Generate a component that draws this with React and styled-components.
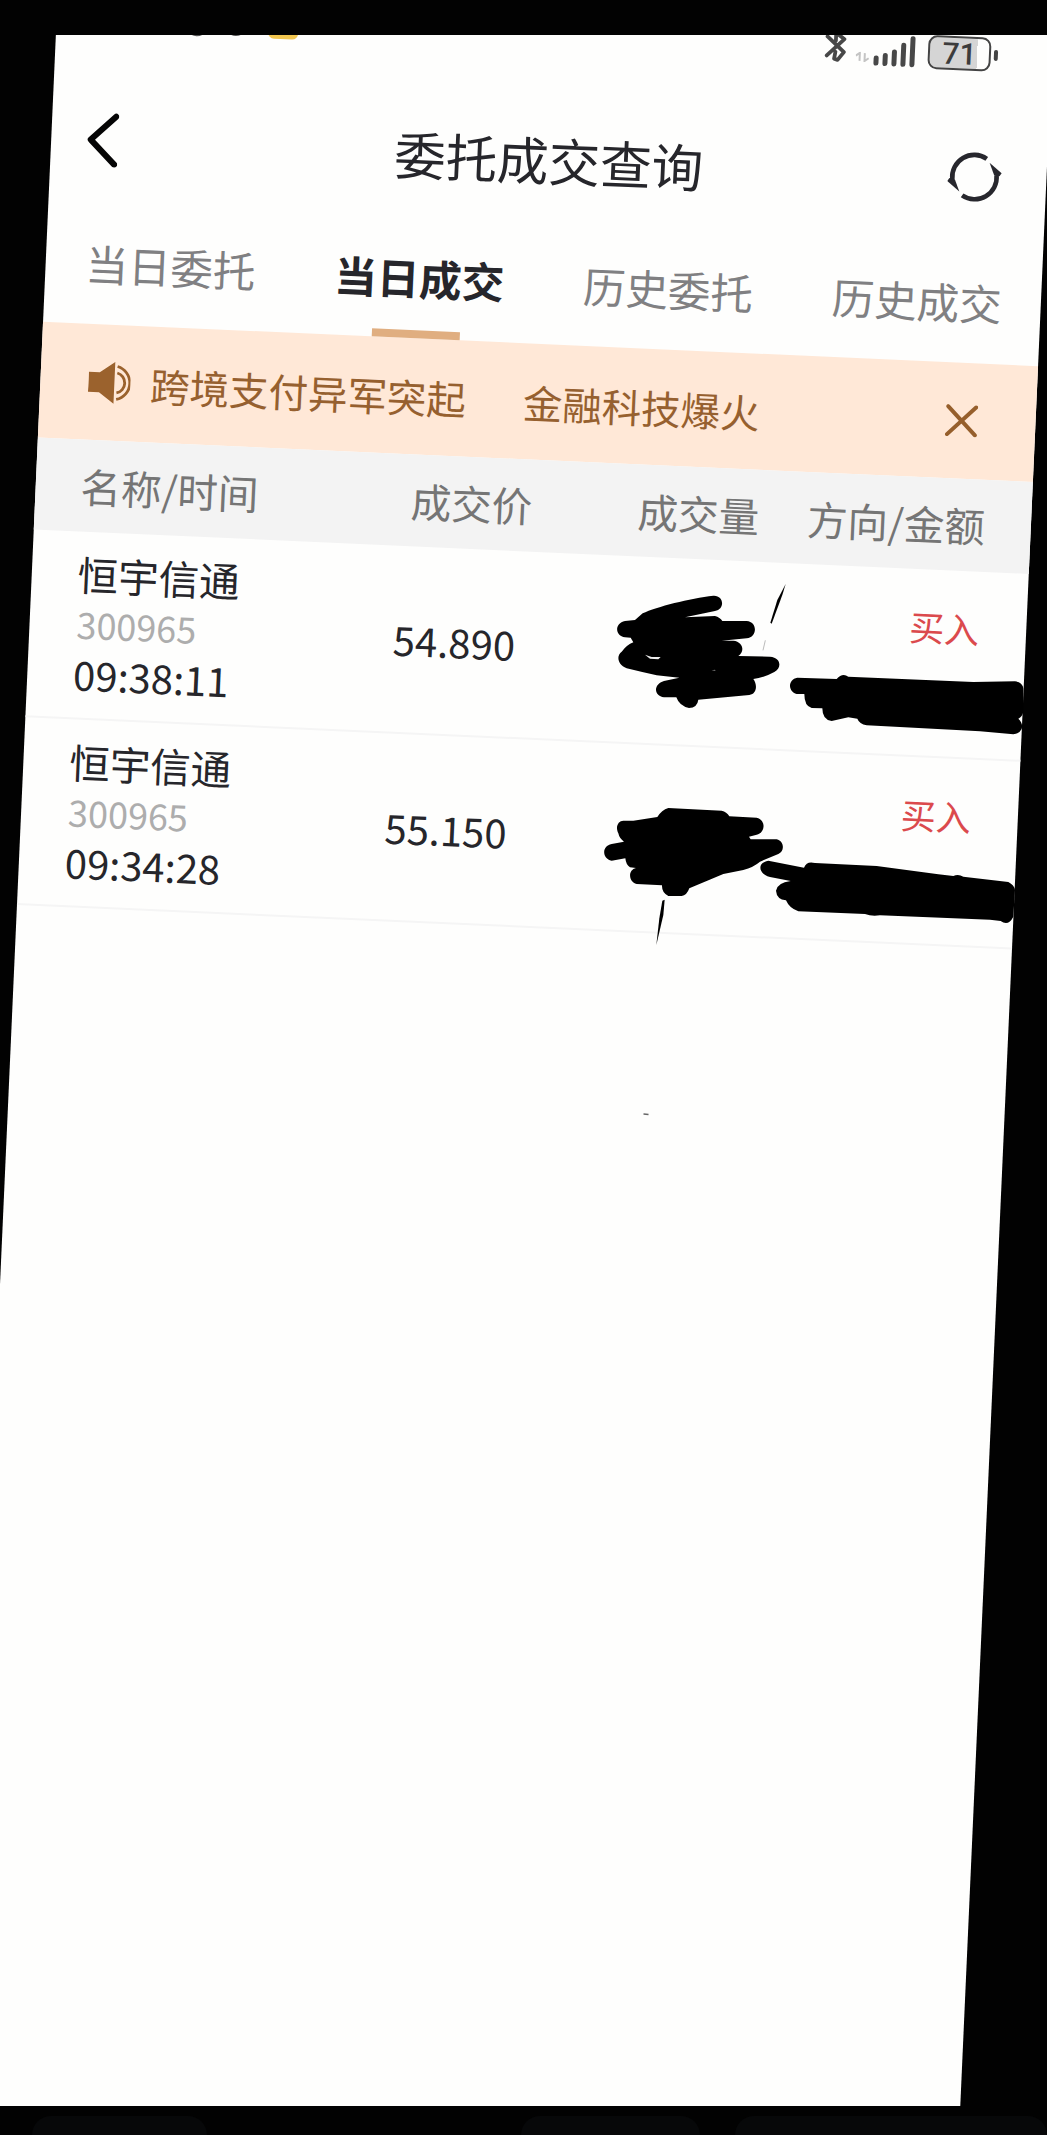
import React from 'react';
import styled, { createGlobalStyle } from 'styled-components';

const tabs = ['当日委托', '当日成交', '历史委托', '历史成交'];
const columns = ['名称/时间', '成交价', '成交量', '方向/金额'];
const news = ['跨境支付异军突起', '金融科技爆火'];
const deals = [
  { name: '恒宇信通', code: '300965', time: '09:38:11', price: '54.890', side: '买入' },
  { name: '恒宇信通', code: '300965', time: '09:34:28', price: '55.150', side: '买入' },
];
const signal = [10, 13, 17, 24, 31];

const BluetoothIcon = () => (
  <svg width='24' height='36' viewBox='0 0 24 36' fill='none' stroke='#484848' strokeWidth='3.8' strokeLinecap='round' strokeLinejoin='round'>
    <path d='M4 8 L21 23 L15 31 L11.5 30 L12.5 23 M12.5 12 V4 L21 10 L4 27' />
  </svg>
);

const BackIcon = () => (
  <svg width='32' height='56' viewBox='0 0 32 56' fill='none' stroke='#050505' strokeWidth='6' strokeLinecap='round' strokeLinejoin='round'>
    <path d='M29 5 L4.5 29 L29 53' />
  </svg>
);

const RefreshIcon = () => (
  <svg width='56' height='56' viewBox='-27 -27 56 56' fill='none' stroke='#27272d' strokeWidth='4.6'>
    <path d='M-22 3 A22 22 0 0 1 11.5 -18.8' />
    <path d='M22 -3 A22 22 0 0 1 -11.5 18.8' />
    <path d='M14.5 -15 L27 -5 L25 -2 L19.5 -3 Z' fill='#27272d' stroke='none' />
    <path d='M-14.5 15 L-27 5 L-25 2 L-19.5 3 Z' fill='#27272d' stroke='none' />
  </svg>
);

const SpeakerIcon = () => (
  <svg width='42' height='44' viewBox='0 0 42 44' fill='none' stroke='#9b622d' strokeWidth='2.8'>
    <path d='M0 12 H11 L26 1 V43 L11 32 H0 Z' fill='#9b622d' stroke='none' />
    <path d='M28.5 12 A10.3 10.3 0 0 1 28.5 32' />
    <path d='M28.5 5.5 A17 17 0 0 1 28.5 38.5' />
  </svg>
);

const CloseIcon = () => (
  <svg width='32' height='32' viewBox='0 0 32 32' stroke='#965f2c' strokeWidth='4' strokeLinecap='round'>
    <path d='M2 2 L30 30 M30 2 L2 30' />
  </svg>
);

// pen strokes that hide the volumes and amounts
const Redaction = () => (
  <Ink width='1047' height='2135' viewBox='0 0 1047 2135'>
    <g transform='translate(590 560) scale(0.33333)'>
      <path d='M158 160 C200 140 300 115 370 107 C402 105 406 148 375 153 L285 172 L375 168 Q390 172 397 183 L470 183 C503 185 503 232 470 235 L395 242 L430 242 C460 245 465 275 445 288 L540 290 C575 293 575 325 553 336 Q520 354 490 357 C502 372 502 402 478 405 L325 419 Q322 443 297 444 Q268 438 259 412 L222 412 C190 408 190 372 222 363 L268 353 L200 346 Q150 335 110 325 C80 313 80 285 95 275 Q110 255 130 247 L122 233 L105 232 C75 228 72 190 105 183 L135 180 Z' />
      <path d='M165 284 L185 291 L212 291 L205 298 L180 296 Z' fill='#eee' />
      <path d='M365 331 L375 329 L377 333 Z' fill='#777' />
      <path d='M587 72 L577 105 L545 191 L541 188 L562 120 Z' />
      <path d='M526 241 L519 271' stroke='#999' strokeWidth='2' />
      <path d='M622 353 L740 357 Q757 338 775 350 L1150 366 L1275 364 Q1297 366 1300 385 V455 Q1297 470 1285 476 Q1300 490 1295 507 Q1288 522 1270 523 L1170 514 L830 496 Q808 492 802 476 L775 472 L725 483 Q697 480 697 445 L665 444 Q643 438 643 402 L620 402 C593 395 593 358 622 353 Z' />
    </g>
    <g transform='translate(580 770) scale(0.33333)'>
      <path d='M265 114 L425 122 Q440 125 448 139 L530 143 C560 150 555 190 530 194 L507 200 L512 208 L590 208 C615 215 613 245 595 252 L540 275 Q520 292 490 300 L430 312 L328 355 Q320 377 305 378 L265 378 Q245 368 246 346 L170 342 C145 335 143 300 168 294 L150 292 Q138 285 136 265 L95 272 C65 265 65 228 95 222 L132 215 Q118 205 115 190 C105 170 115 152 130 152 L160 152 L232 141 Q245 120 265 114 Z' />
      <path d='M565 272 L672 293 Q680 272 705 279 L890 288 L1075 313 L1120 318 Q1135 311 1150 320 L1285 336 Q1303 345 1305 360 L1300 440 Q1285 470 1262 453 L1230 449 L900 436 Q875 440 855 432 L655 424 Q628 415 618 391 Q590 388 588 362 Q592 338 632 333 L570 321 C535 312 530 278 565 272 Z' />
      <path d='M254 389 L250 435 L229 525 L238 445 L247 392 Z' />
    </g>
    <path d='M643.5 1114 L648.5 1114.5' stroke='#666' strokeWidth='1.4' />
  </Ink>
);

const App = () => {
  return (
    <Page>
      <GlobalStyle />
      <Viewport>
        <Phone>
          <StatusBar>
            <Notices>
              <Dot $lift={0} />
              <Dot $lift={2} />
              <Badge />
            </Notices>
            <Device>
              <BluetoothIcon />
              <Traffic>
                <svg width='14' height='10' viewBox='0 0 14 10' fill='none' stroke='#c4c4c4' strokeWidth='2'>
                  <path d='M0 4 L4 1 V9 M9 1 V9 L13 6' />
                </svg>
              </Traffic>
              <Signal>
                {signal.map((size) => (
                  <Bar key={size} $size={size} />
                ))}
              </Signal>
              <Battery>71</Battery>
              <BatteryCap />
            </Device>
          </StatusBar>
          <TitleBar>
            <BackIcon />
            <Title>委托成交查询</Title>
            <RefreshIcon />
          </TitleBar>
          <Tabs>
            {tabs.map((tab, index) => (
              <Tab key={tab} $active={index === 1}>
                {tab}
              </Tab>
            ))}
          </Tabs>
          <Banner>
            <SpeakerIcon />
            <News>
              {news.map((item) => (
                <span key={item}>{item}</span>
              ))}
            </News>
            <CloseIcon />
          </Banner>
          <TableHead>
            {columns.map((column) => (
              <span key={column}>{column}</span>
            ))}
          </TableHead>
          {deals.map((deal) => (
            <Row key={deal.time}>
              <Stock>
                <Name>{deal.name}</Name>
                <Code>{deal.code}</Code>
                <Time>{deal.time}</Time>
              </Stock>
              <Price>{deal.price}</Price>
              <span />
              <Side>{deal.side}</Side>
            </Row>
          ))}
        </Phone>
      </Viewport>
      <Dock>
        <Pill $width={175} />
        <Pill $width={179} />
        <Pill $width={312} />
      </Dock>
      <Redaction />
    </Page>
  );
};

const GlobalStyle = createGlobalStyle`
  * {
    box-sizing: border-box;
  }
  body {
    margin: 0;
    background: #020202;
    font-family: 'Noto Sans CJK SC', sans-serif;
  }
`;

const Page = styled.div`
  position: relative;
  width: 1047px;
  height: 2135px;
  padding-top: 35px;
  overflow: hidden;
  background: #020202;
`;

const Viewport = styled.main`
  height: 2071px;
  overflow: hidden;
`;

const Phone = styled.div`
  width: 996px;
  height: 2240px;
  margin: -70px 0 0 59px;
  background: #fefefd;
  color: #26262b;
  transform: rotate(2.56deg);
  transform-origin: 0 0;
`;

const StatusBar = styled.div`
  display: flex;
  justify-content: space-between;
  align-items: flex-end;
  height: 65px;
  padding: 0 54px 0 129px;
`;

const Notices = styled.div`
  display: flex;
  align-items: flex-end;
  gap: 16px;
`;

const Dot = styled.span`
  width: 23px;
  height: 23px;
  margin-bottom: ${({ $lift }) => $lift}px;
  border-radius: 50%;
  background: #555;
`;

const Badge = styled.span`
  width: 30px;
  height: 30px;
  margin: 0 0 1px 5px;
  border-radius: 6px;
  background: #f2c64f;
`;

const Device = styled.div`
  display: flex;
  align-items: flex-end;
`;

const Traffic = styled.span`
  display: flex;
  margin: 0 4px 4px 9px;
`;

const Signal = styled.div`
  display: flex;
  align-items: flex-end;
  gap: 3.5px;
  margin: 0 13px 1px 0;
`;

const Bar = styled.span`
  width: 5.5px;
  height: ${({ $size }) => $size}px;
  border-radius: 3px;
  background: #484848;
`;

const Battery = styled.div`
  width: 63px;
  height: 34px;
  border: 2px solid #444;
  border-radius: 9px;
  background: linear-gradient(to right, #d5d5d5 80%, #fefefd 80%);
  color: #3c3c3c;
  font-family: Roboto, sans-serif;
  font-size: 30px;
  font-weight: 500;
  line-height: 32px;
  text-align: center;
`;

const BatteryCap = styled.span`
  width: 4px;
  height: 11px;
  margin: 0 0 11px 3px;
  border-radius: 2px;
  background: #444;
`;

const TitleBar = styled.header`
  display: flex;
  justify-content: space-between;
  align-items: center;
  height: 180px;
  padding: 34px 43px 0 35px;
`;

const Title = styled.h1`
  margin: 0 0 0 32px;
  font-size: 51.5px;
  font-weight: 400;
  line-height: 60px;
`;

const Tabs = styled.nav`
  display: flex;
  height: 111.5px;
`;

const Tab = styled.div`
  display: flex;
  flex: 1;
  flex-direction: column;
  align-items: center;
  justify-content: space-between;
  padding-left: 1px;
  color: ${({ $active }) => ($active ? '#26262b' : '#808082')};
  font-size: 42.5px;
  font-weight: ${({ $active }) => ($active ? 700 : 400)};
  line-height: 101px;

  &::after {
    content: '';
    width: 88px;
    height: 8px;
    margin-right: 3px;
    background: ${({ $active }) => ($active ? '#e0ae80' : 'transparent')};
  }
`;

const Banner = styled.section`
  display: flex;
  align-items: center;
  height: 116.5px;
  padding: 0 58px 0 48px;
  background: #ffe8d7;
  color: #96602f;
`;

const News = styled.div`
  display: flex;
  flex: 1;
  gap: 57px;
  margin-left: 20px;
  font-size: 39.5px;
  line-height: 60px;
`;

const TableHead = styled.div`
  display: grid;
  grid-template-columns: 226px 226px 227px 226px;
  align-items: center;
  height: 92px;
  padding: 0 0 1px 45px;
  background: #f3f3f3;
  color: #757575;
  font-size: 40.5px;
  line-height: 60px;
  text-align: right;

  span:first-child {
    text-align: left;
  }
`;

const Row = styled.article`
  display: grid;
  grid-template-columns: 227px 227px 227px 227px;
  align-items: center;
  height: 188px;
  padding-left: 43px;
  border-bottom: 2px solid #f5f5f5;
`;

const Stock = styled.div`
  display: flex;
  flex-direction: column;
  padding: 0 0 1px 3px;
`;

const Name = styled.span`
  font-size: 40.5px;
  line-height: 55px;
`;

const Code = styled.span`
  padding-left: 1px;
  color: #adadad;
  font-size: 36px;
  line-height: 45px;
`;

const Time = styled.span`
  font-size: 40px;
  line-height: 57px;
`;

const Price = styled.span`
  padding: 0 11px 1px 0;
  font-size: 40px;
  text-align: right;
`;

const Side = styled.span`
  padding: 0 2px 73px 0;
  color: #db4a4d;
  font-size: 35px;
  line-height: 40px;
  text-align: right;
`;

const Dock = styled.footer`
  display: flex;
  align-items: flex-end;
  height: 29px;
  padding-left: 32px;
`;

const Pill = styled.span`
  flex: none;
  width: ${({ $width }) => $width}px;
  height: 19px;
  border-radius: 30px 30px 0 0;
  background: #070809;

  &:nth-child(2) {
    margin: 0 35px 0 314px;
  }
`;

const Ink = styled.svg`
  position: absolute;
  top: 0;
  left: 0;
  fill: #000;
`;

export default App;
